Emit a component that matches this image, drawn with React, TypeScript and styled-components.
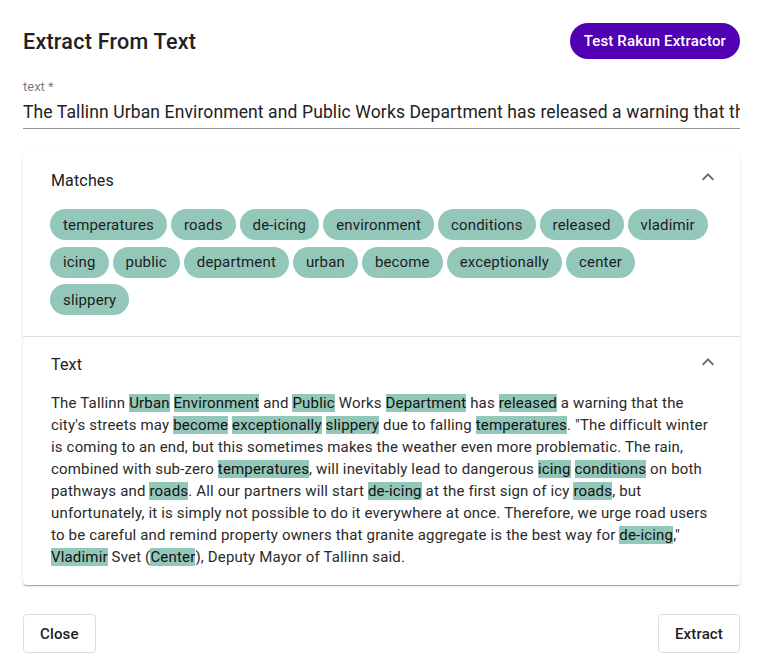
import React from "react";
import styled, { createGlobalStyle } from "styled-components";

const GlobalStyle = createGlobalStyle`
  html, body { margin: 0; padding: 0; background: #ffffff; }
  body { font-family: Roboto, "Noto Sans", Arial, sans-serif; color: rgba(0,0,0,0.87); }
  * { box-sizing: border-box; }
`;

const Dialog = styled.div`
  width: 765px;
  padding: 23px 25px 18px 23px;
  display: flex;
  flex-direction: column;
`;

const Header = styled.div`
  display: flex;
  align-items: center;
  justify-content: space-between;
  height: 36px;
`;

const Title = styled.h2`
  margin: 0;
  font-size: 21.5px;
  font-weight: 500;
  color: #212121;
  letter-spacing: 0.25px;
`;

const PillButton = styled.button`
  height: 36px;
  padding: 0 14px;
  border: none;
  border-radius: 18px;
  background: #5200b3;
  color: #ffffff;
  font-family: Roboto, sans-serif;
  font-size: 15px;
  font-weight: 500;
  letter-spacing: 0.15px;
  cursor: pointer;
`;

const Field = styled.div`
  margin-top: 20px;
  display: flex;
  flex-direction: column;
  border-bottom: 1px solid #949494;
`;

const Label = styled.label`
  font-size: 13px;
  line-height: 16px;
  color: rgba(0,0,0,0.55);
`;

const Input = styled.input`
  margin-top: 2px;
  height: 31px;
  border: none;
  outline: none;
  padding: 0 0 2px 0;
  font-family: Roboto, sans-serif;
  font-size: 17.5px;
  letter-spacing: 0.12px;
  color: #222;
  background: transparent;
  width: 100%;
`;

const Card = styled.div`
  margin-top: 23px;
  border-radius: 4px;
  background: #fff;
  box-shadow: 0px 2px 1px -1px rgba(0,0,0,0.2), 0px 1px 1px 0px rgba(0,0,0,0.14), 0px 1px 3px 0px rgba(0,0,0,0.12);
`;

const Section = styled.section<{ $divider?: boolean }>`
  border-top: ${(p) => (p.$divider ? "1px solid #dcdcdc" : "none")};
`;

const SectionHead = styled.div<{ $h: number }>`
  height: ${(p) => p.$h}px;
  display: flex;
  align-items: center;
  justify-content: space-between;
  padding: 0 20px 0 28px;
  font-size: 16px;
  letter-spacing: 0.15px;
  color: #212121;
`;

const Chevron = styled.svg`
  width: 24px;
  height: 24px;
  fill: #6f6f6f;
  margin-bottom: 6px;
`;

const Chips = styled.div`
  display: flex;
  flex-wrap: wrap;
  column-gap: 4px;
  row-gap: 6.5px;
  padding: 1px 28px 21px 27px;
`;

const Chip = styled.span`
  height: 31px;
  display: inline-flex;
  align-items: center;
  padding: 0 13px;
  border-radius: 16px;
  background: #93c7ba;
  color: #1d1d1d;
  font-size: 15px;
  letter-spacing: 0.15px;
`;

const Paragraph = styled.p`
  margin: 0;
  padding: 0 27px 17px 28px;
  font-size: 15px;
  line-height: 22px;
  letter-spacing: 0.17px;
  color: #2a2a2a;
`;

const Mark = styled.span`
  background: #93c7ba;
  color: #111;
`;

const Footer = styled.div`
  margin-top: 29px;
  display: flex;
  justify-content: space-between;
`;

const OutlineButton = styled.button`
  height: 39px;
  padding: 0 16px;
  background: #fff;
  border: 1px solid #dedede;
  border-radius: 4px;
  font-family: Roboto, sans-serif;
  font-size: 15px;
  font-weight: 500;
  letter-spacing: 0.15px;
  color: #222;
  cursor: pointer;
`;

const chips = [
  "temperatures", "roads", "de-icing", "environment", "conditions", "released", "vladimir",
  "icing", "public", "department", "urban", "become", "exceptionally", "center", "slippery",
];

const source =
  'The Tallinn [Urban] [Environment] and [Public] Works [Department] has [released] a warning that the city\'s streets may [become] [exceptionally] [slippery] due to falling [temperatures]. "The difficult winter is coming to an end, but this sometimes makes the weather even more problematic. The rain, combined with sub-zero [temperatures], will inevitably lead to dangerous [icing] [conditions] on both pathways and [roads]. All our partners will start [de-icing] at the first sign of icy [roads], but unfortunately, it is simply not possible to do it everywhere at once. Therefore, we urge road users to be careful and remind property owners that granite aggregate is the best way for [de-icing]," [Vladimir] Svet ([Center]), Deputy Mayor of Tallinn said.';

const plain = source.replace(/[[\]]/g, "");

const ExpandLess = () => (
  <Chevron viewBox="0 0 24 24">
    <path d="M12 8l-6 6 1.41 1.41L12 10.83l4.59 4.58L18 14z" />
  </Chevron>
);

export default function App() {
  const parts = source.split(/(\[[^\]]+\])/g).filter(Boolean);
  return (
    <>
      <GlobalStyle />
      <Dialog>
        <Header>
          <Title>Extract From Text</Title>
          <PillButton>Test Rakun Extractor</PillButton>
        </Header>
        <Field>
          <Label>text *</Label>
          <Input readOnly value={plain} />
        </Field>
        <Card>
          <Section>
            <SectionHead $h={56}>
              Matches
              <ExpandLess />
            </SectionHead>
            <Chips>
              {chips.map((c) => (
                <Chip key={c}>{c}</Chip>
              ))}
            </Chips>
          </Section>
          <Section $divider>
            <SectionHead $h={55}>
              Text
              <ExpandLess />
            </SectionHead>
            <Paragraph>
              {parts.map((p, i) =>
                p.startsWith("[") ? <Mark key={i}>{p.slice(1, -1)}</Mark> : <React.Fragment key={i}>{p}</React.Fragment>
              )}
            </Paragraph>
          </Section>
        </Card>
        <Footer>
          <OutlineButton>Close</OutlineButton>
          <OutlineButton>Extract</OutlineButton>
        </Footer>
      </Dialog>
    </>
  );
}
